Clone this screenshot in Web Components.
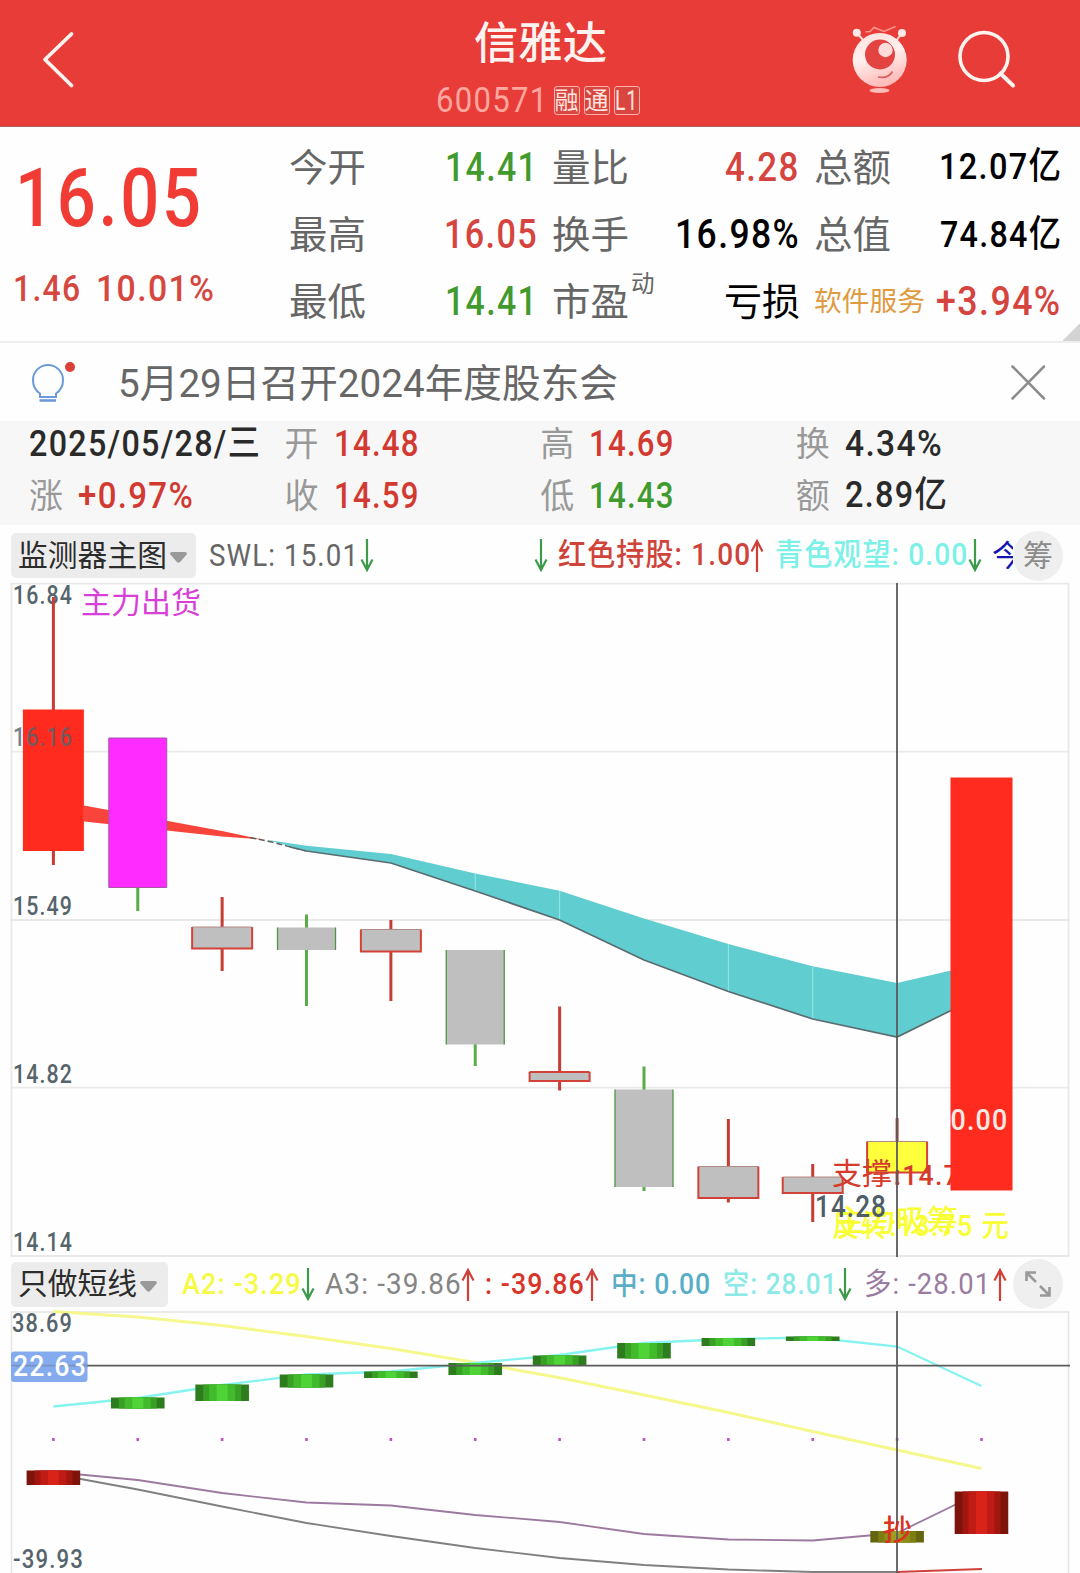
<!DOCTYPE html>
<html lang="zh-CN">
<head>
<meta charset="utf-8">
<title>信雅达 600571</title>
<style>
    body {
        margin: 0;
        width: 1080px;
        height: 1573px;
        overflow: hidden;
        background: #fefefe;
        font-family: Roboto, "Noto Sans CJK SC", sans-serif;
    }
</style>
</head>
<body>
<stock-page></stock-page>

<script>
// Single line of text squeezed or stretched to the width given in "w"
class FitText extends HTMLElement {
    constructor() {
        super();
        this.attachShadow({ mode: 'open' });
        this.shadowRoot.innerHTML = `
            <style>
                :host {
                    display: block;
                    flex: none;
                    line-height: 1;
                    white-space: nowrap;
                }

                span {
                    display: inline-block;
                    transform-origin: 0 50%;
                }

                .digits { letter-spacing: 0.040em; }
            </style>
            <span><slot></slot></span>
        `;
    }

    connectedCallback() {
        const w = Number(this.getAttribute('w'));
        const size = this.getAttribute('size');
        const span = this.shadowRoot.querySelector('span');
        if (size) this.style.fontSize = size + 'px';
        this.style.height = '1em';
        span.classList.toggle('digits', /\d/.test(this.textContent));
        if (w) {
            this.style.width = w + 'px';
            span.style.transform = `scaleX(${w / span.offsetWidth})`;
        }
    }
}
customElements.define('fit-text', FitText);

class AppHeader extends HTMLElement {
    constructor() {
        super();
        this.attachShadow({ mode: 'open' });
        this.shadowRoot.innerHTML = `
            <style>
                :host {
                    display: grid;
                    grid-template-columns: 330px 1fr 330px;
                    height: 126px;
                    background: #e83c38;
                    border-bottom: 1px solid #a8605c;
                    color: #fff3f0;
                }

                .title {
                    display: flex;
                    flex-direction: column;
                    align-items: center;
                    padding-top: 22px;
                    font-weight: 500;
                }

                .code {
                    display: flex;
                    align-items: center;
                    gap: 4px;
                    margin: 17px 5px 0 0;
                    font-weight: 400;
                }

                .code > fit-text:first-child {
                    color: #ffa79f;
                    margin-right: 2px;
                }

                .badge {
                    box-sizing: border-box;
                    width: 26px;
                    height: 29px;
                    display: flex;
                    align-items: center;
                    justify-content: center;
                    border: 1px solid #ffb0aa;
                    border-radius: 3px;
                    background: #d9453f;
                    color: #ffe3df;
                }
            </style>
            <svg width="330" height="126" fill="none" stroke="#fff3f0" stroke-width="3.8" stroke-linecap="round" stroke-linejoin="round">
                <path d="M71.500 34L45 59.500L71.500 85.500"/>
            </svg>
            <div class="title">
                <fit-text w="133" size="44">信雅达</fit-text>
                <div class="code">
                    <fit-text w="112" size="35">600571</fit-text>
                    <div class="badge"><fit-text w="24" size="24">融</fit-text></div>
                    <div class="badge"><fit-text w="24" size="24">通</fit-text></div>
                    <div class="badge"><fit-text w="23" size="28">L1</fit-text></div>
                </div>
            </div>
            <svg width="330" height="126" viewBox="750 0 330 126" fill="none">
                <defs>
                    <linearGradient id="face" x1="0" y1="0" x2="0.3" y2="1">
                        <stop offset="0" stop-color="#ffdfdc"/>
                        <stop offset="0.500" stop-color="#fff0ee"/>
                        <stop offset="1" stop-color="#ffbdbb"/>
                    </linearGradient>
                </defs>
                <g stroke="#ffdad6" stroke-width="2">
                    <path d="M857 33L864 41M902 33L896 41"/>
                    <path d="M865.500 31.700L870 31.500L874 27.500L884 31.500L895.500 26.500" stroke="#ff958f" stroke-width="1.500"/>
                </g>
                <circle cx="856.800" cy="32.800" r="4" fill="#ffe9e6"/>
                <circle cx="902" cy="33" r="4" fill="#ffe9e6"/>
                <circle cx="879.700" cy="60" r="27" fill="url(#face)"/>
                <circle cx="880" cy="54.500" r="15" fill="#e44441"/>
                <circle cx="885.500" cy="50" r="7.200" fill="#ffdcd9"/>
                <path d="M878 77Q888 79 892.500 71.500" stroke="#dc5a57" stroke-width="1.600"/>
                <ellipse cx="879.500" cy="90.500" rx="10" ry="2.500" fill="#ffbcb8"/>
                <circle cx="984" cy="56.500" r="24" stroke="#fff3f0" stroke-width="3.600"/>
                <path d="M1000.500 73.500L1013 85.500" stroke="#fff3f0" stroke-width="4" stroke-linecap="round"/>
            </svg>
        `;
    }
}
customElements.define('app-header', AppHeader);

class QuotePanel extends HTMLElement {
    constructor() {
        super();
        this.attachShadow({ mode: 'open' });
        this.shadowRoot.innerHTML = `
            <style>
                :host {
                    display: grid;
                    grid-template-columns: 275px 249px 248px 248px;
                    column-gap: 14px;
                    box-sizing: border-box;
                    height: 216px;
                    border-bottom: 2px solid #eee;
                    background: linear-gradient(135deg, transparent 11px, #d3d3d3 12px) right bottom / 17px 17px no-repeat;
                    font-weight: 500;
                    color: #000;
                }

                .price {
                    padding: 31px 0 0 15px;
                    color: #f03c34;
                }

                .change {
                    display: flex;
                    gap: 15px;
                    margin: 31px 0 0 -2px;
                    color: #d6473f;
                }

                .col {
                    display: flex;
                    flex-direction: column;
                    padding-top: 8px;
                }

                .row {
                    height: 66.700px;
                    display: flex;
                    align-items: center;
                    justify-content: space-between;
                }

                .label {
                    color: #666;
                    font-weight: 400;
                    position: relative;
                }

                .label sup {
                    position: absolute;
                    left: 79px;
                    top: -10px;
                    font-size: 23.500px;
                    line-height: 1;
                }

                .red { color: #d5443f; }
                .green { color: #429a2e; }
                .cn { font-weight: 400; }
                .sector { color: #e09b42; font-weight: 400; }
            </style>
            <div class="price">
                <fit-text w="189" size="81">16.05</fit-text>
                <div class="change">
                    <fit-text w="68" size="37.5">1.46</fit-text>
                    <fit-text w="119" size="37.5">10.01%</fit-text>
                </div>
            </div>
            <div class="col">
                <div class="row"><fit-text class="label" w="77" size="38">今开</fit-text><fit-text class="green" w="93" size="40">14.41</fit-text></div>
                <div class="row"><fit-text class="label" w="77" size="38">最高</fit-text><fit-text class="red" w="94" size="40">16.05</fit-text></div>
                <div class="row"><fit-text class="label" w="77" size="38">最低</fit-text><fit-text class="green" w="93" size="40">14.41</fit-text></div>
            </div>
            <div class="col">
                <div class="row"><fit-text class="label" w="77" size="38">量比</fit-text><fit-text class="red" w="75" size="40">4.28</fit-text></div>
                <div class="row"><fit-text class="label" w="77" size="38">换手</fit-text><fit-text w="125" size="40">16.98%</fit-text></div>
                <div class="row"><div class="label"><fit-text w="77" size="38">市盈</fit-text><sup>动</sup></div><fit-text class="cn" w="76" size="38">亏损</fit-text></div>
            </div>
            <div class="col">
                <div class="row"><fit-text class="label" w="77" size="38">总额</fit-text><fit-text w="123" size="37" style="margin-top:-4px">12.07亿</fit-text></div>
                <div class="row"><fit-text class="label" w="77" size="38">总值</fit-text><fit-text w="122" size="37" style="margin-top:-2px">74.84亿</fit-text></div>
                <div class="row"><fit-text class="sector" w="111" size="27.5">软件服务</fit-text><fit-text class="red" w="126" size="40">+3.94%</fit-text></div>
            </div>
        `;
    }
}
customElements.define('quote-panel', QuotePanel);

class NoticeBar extends HTMLElement {
    constructor() {
        super();
        this.attachShadow({ mode: 'open' });
        this.shadowRoot.innerHTML = `
            <style>
                :host {
                    display: flex;
                    align-items: center;
                    height: 78px;
                    color: #666;
                }

                fit-text { padding-top: 5px; }
                .close { margin-left: auto; }
            </style>
            <svg width="118" height="78" fill="none" stroke="#6b9ad8" stroke-width="2">
                <path d="M40 50.500C36 48 33 43 33 37A15 15 0 0 1 63 37C63 43 60 48 56 50.500V54H40Z"/>
                <path d="M39.500 57.500H56" stroke-width="2.600"/>
                <circle cx="70" cy="24" r="5" fill="#dc3f39" stroke="none"/>
            </svg>
            <fit-text w="500" size="38.5"><slot></slot></fit-text>
            <svg class="close" width="80" height="78" fill="none" stroke="#8c8c8c" stroke-width="2.500" stroke-linecap="round">
                <path d="M12.500 23.500L44 55.500M44 23.500L12.500 55.500"/>
            </svg>
        `;
    }
}
customElements.define('notice-bar', NoticeBar);

class DayStrip extends HTMLElement {
    constructor() {
        super();
        this.attachShadow({ mode: 'open' });
        this.shadowRoot.innerHTML = `
            <style>
                :host {
                    display: grid;
                    grid-template-columns: repeat(4, 255.600px);
                    grid-template-rows: 52px 52px;
                    box-sizing: border-box;
                    height: 104px;
                    padding-left: 29px;
                    background: #f7f7f7;
                    color: #2a2a2a;
                    font-weight: 500;
                }

                div {
                    display: flex;
                    align-items: center;
                    gap: 15px;
                    padding-bottom: 7px;
                }

                .l {
                    color: #999;
                    font-weight: 400;
                }

                .red { color: #d23a31; }
                .green { color: #3f9b2f; }
            </style>
            <div><fit-text w="232" size="37">2025/05/28/三</fit-text></div>
            <div><fit-text class="l" w="34" size="34">开</fit-text><fit-text class="red" w="86" size="37">14.48</fit-text></div>
            <div><fit-text class="l" w="34" size="34">高</fit-text><fit-text class="red" w="86" size="37">14.69</fit-text></div>
            <div><fit-text class="l" w="34" size="34">换</fit-text><fit-text w="98" size="37">4.34%</fit-text></div>
            <div><fit-text class="l" w="34" size="34">涨</fit-text><fit-text class="red" w="116" size="37">+0.97%</fit-text></div>
            <div><fit-text class="l" w="34" size="34">收</fit-text><fit-text class="red" w="86" size="37">14.59</fit-text></div>
            <div><fit-text class="l" w="34" size="34">低</fit-text><fit-text class="green" w="86" size="37">14.43</fit-text></div>
            <div><fit-text class="l" w="34" size="34">额</fit-text><fit-text w="103" size="36.5">2.89亿</fit-text></div>
        `;
    }
}
customElements.define('day-strip', DayStrip);

// Small trend arrow: <trend-arrow dir="up|down">
class TrendArrow extends HTMLElement {
    constructor() {
        super();
        this.attachShadow({ mode: 'open' });
    }

    connectedCallback() {
        const up = this.getAttribute('dir') === 'up';
        this.shadowRoot.innerHTML = `
            <style>
                :host {
                    display: block;
                    flex: none;
                    width: 14px;
                    height: 33px;
                }
            </style>
            <svg width="14" height="33" fill="none" stroke-width="2.200" stroke="${up ? '#cf4038' : '#3c9a4a'}">
                <path d="${up ? 'M7 33V2M1.500 12.500L7 2L12.500 12.500' : 'M7 0V31M1.500 20.500L7 31L12.500 20.500'}"/>
            </svg>
        `;
    }
}
customElements.define('trend-arrow', TrendArrow);

class IndicatorBar extends HTMLElement {
    constructor() {
        super();
        this.attachShadow({ mode: 'open' });
        this.shadowRoot.innerHTML = `
            <style>
                :host {
                    display: flex;
                    align-items: center;
                    box-sizing: border-box;
                    padding-left: 11px;
                }

                .select {
                    box-sizing: border-box;
                    flex: none;
                    width: var(--select-width);
                    height: 45px;
                    display: flex;
                    align-items: center;
                    gap: 3px;
                    padding-left: 7px;
                    border-radius: 5px;
                    background: #ececec;
                    color: #2c2c2c;
                }

                .select svg { margin-top: 4px; }

                .values {
                    display: flex;
                    align-items: center;
                    width: calc(1002px - var(--select-width));
                    overflow: hidden;
                    flex: none;
                }

                .round {
                    flex: none;
                    width: 50px;
                    height: 50px;
                    display: flex;
                    align-items: center;
                    justify-content: center;
                    border-radius: 50%;
                    background: #efefef;
                    color: #8b8b8b;
                }
            </style>
            <div class="select">
                <slot name="name"></slot>
                <svg width="17" height="11" fill="#999"><path d="M0 2Q0 0 2 0H15Q17 0 17 2L11 9Q8.500 12.500 6 9Z"/></svg>
            </div>
            <div class="values"><slot></slot></div>
            <div class="round"><slot name="action"></slot></div>
        `;
    }
}
customElements.define('indicator-bar', IndicatorBar);

// x of the centre of trading day i
const dayX = i => 53.4 + 84.37 * i;

const label = (x, y, w, size, text, fill = '#56646c', weight = 500) =>
    `<text x="${x}" y="${y}" font-size="${size}" textLength="${w}" lengthAdjust="spacingAndGlyphs" fill="${fill}" font-weight="${weight}"${/\d/.test(text) ? ' letter-spacing="1.300"' : ''}>${text}</text>`;

class PriceChart extends HTMLElement {
    constructor() {
        super();
        this.attachShadow({ mode: 'open' });

        // kind, high, top, bottom, low
        const candles = [
            ['red', 597, 709.5, 851, 865],
            ['magenta', 738, 738, 887.5, 911],
            ['up', 897, 927, 948.5, 971],
            ['down', 914.5, 927.5, 950, 1006],
            ['up', 920, 929.5, 951.5, 1001],
            ['down', 950, 950, 1044.5, 1066],
            ['up', 1006.5, 1072, 1081, 1090.5],
            ['down', 1066.5, 1089.5, 1187, 1191],
            ['up', 1119, 1166.5, 1198, 1202.5],
            ['up', 1164, 1177, 1193, 1222],
            ['yellow', 1118, 1141.5, 1172.5, 1185],
        ];
        const fills = { red: '#ff2b1e', magenta: '#ff2bff', yellow: '#ffff3c', up: '#bfbfbf', down: '#bfbfbf' };

        const bars = candles.map(([kind, high, top, bottom, low], i) => {
            const green = kind === 'down' || kind === 'magenta';
            const half = kind === 'red' ? 31 : green ? 29.5 : 30.5;
            const x = dayX(i);
            const ink = green ? '#58ad48' : '#c63d33';
            const edge = kind === 'magenta' ? '#a35aa5' : green ? '#4f9746' : '#d24238';
            const l = x - half + 0.5;
            const r = x + half - 0.5;
            let out = `<path d="M${x} ${high}V${low}" stroke="${ink}" stroke-width="3"/>`;
            out += `<path d="M${l} ${top}H${r}V${bottom}H${l}Z" fill="${fills[kind]}"/>`;
            if (kind === 'magenta') {
                out += `<path d="M${l} ${top}H${r}V${bottom}H${l}Z" stroke="${edge}"/>`;
            } else if (green) {
                out += `<path d="M${l} ${top}V${bottom}M${r} ${top}V${bottom}" stroke="${edge}" stroke-width="1.300"/>`;
            } else if (kind !== 'red') {
                out += `<path d="M${l} ${top}V${bottom}H${r}V${top}" stroke="${edge}" stroke-width="2"/>`;
                out += `<path d="M${l} ${top}H${r}" stroke="${i === 6 ? edge : '#b48a86'}" stroke-width="${i === 6 ? 2 : 1}"/>`;
            }
            return out;
        }).join('');

        const upper = [845.7, 854, 873.5, 890.7, 918.5, 944, 966.3, 983];
        const lower = [851, 863, 891, 920, 960, 991.5, 1019, 1037];
        const up = upper.map((y, i) => `${dayX(i + 3)} ${y}`);
        const low = lower.map((y, i) => `${dayX(i + 3)} ${y}`);
        const seams = [5, 6, 8, 9].map(i => `M${dayX(i)} ${upper[i - 3]}V${lower[i - 3]}`).join('');

        this.shadowRoot.innerHTML = `
            <style>
                :host { display: block; height: 675px; }
                svg { display: block; overflow: visible; }
            </style>
            <svg width="1080" height="675" viewBox="0 582 1080 675" fill="none">
                <path d="M11.500 583.700H1068.500V1256H11.500ZM11.500 751.700H1068.500M11.500 920H1068.500M11.500 1087.700H1068.500" stroke="#e9e9e9" stroke-width="1.800"/>
                ${label(13, 604, 60, 25, '16.84')}
                <path d="M84 805.500L222 831L262 839.500L222 836.500L84 821.500Z" fill="#f8443b"/>
                <path d="M250 837.500L272 842L${low[0]}" stroke="#5d5d5d" stroke-width="1.600" stroke-dasharray="6 3"/>
                <path d="M268 840L${up.join('L')}L951 970.500V1010.500L${[...low].reverse().join('L')}Z" fill="#60cdd0"/>
                <path d="${seams}" stroke="#9ce6e8"/>
                <path d="M290 847L${low.join('L')}L951 1010.500" stroke="#5a6c70" stroke-width="1.700"/>
                ${bars}
                <g opacity="0.800">${label(13, 745.5, 60, 25, '16.16')}</g>
                ${label(13, 914.7, 60, 25, '15.49')}
                ${label(13, 1082.7, 60, 25, '14.82')}
                ${label(13, 1250.7, 60, 25, '14.14')}
                ${label(81, 613, 120, 30, '主力出货', '#d83fd8', 400)}
                ${label(832, 1184, 60, 30, '支撑', '#d63a2b', 400)}
                ${label(894, 1184.5, 66, 28.5, ':14.7', '#d63a2b', 500)}
                ${label(832, 1236, 178, 30, '反转:13.75 元', '#f8ff35', 500)}
                ${label(834, 1231, 124, 30, '主力吸筹', '#f8ff35', 500)}
                ${label(815, 1217, 72, 30.5, '14.28', '#4e5d68', 500)}
                <path d="M897 583V1257" stroke="#5a5a5a" stroke-width="1.800"/>
                <rect x="950.500" y="777.500" width="62" height="413" fill="#ff2b1e"/>
                ${label(950.5, 1130, 58, 29, '0.00', '#ffe9e4', 500)}
            </svg>
        `;
    }
}
customElements.define('price-chart', PriceChart);

class ShortLineChart extends HTMLElement {
    constructor() {
        super();
        this.attachShadow({ mode: 'open' });

        const bars = [
            ['r', 1470.5, 1485], ['g', 1397.5, 1408.5], ['g', 1384.5, 1401], ['g', 1374.5, 1387.5],
            ['g', 1371.5, 1378], ['g', 1363, 1375], ['g', 1355.5, 1365], ['g', 1343, 1358.5],
            ['g', 1338, 1346], ['g', 1336.5, 1341], ['o', 1531, 1542.5], ['r', 1491.5, 1534],
        ];
        // from the outer edge to the middle
        const shades = {
            r: ['#7d140c', '#a31610', '#bd1b13', '#d92218'],
            g: ['#2d7d1f', '#38a024', '#41bb2b', '#4fd337'],
            o: ['#66650f', '#7d7c13', '#8c8c18', '#9d9d22'],
        };
        const steps = [26.8, 19, 13, 5.5];
        const drums = bars.map(([c, top, bottom], i) => steps.map((half, s) =>
            `<rect x="${dayX(i) - half}" y="${top}" width="${half * 2}" height="${bottom - top}" fill="${shades[c][s]}"/>`
        ).join('')).join('');

        const line = ys => 'M' + ys.map((y, i) => `${dayX(i)} ${y}`).join('L');
        const yellow = [1311.5, 1317, 1325.5, 1336.5, 1348.5, 1362.5, 1377.7, 1395, 1412.5, 1431.5, 1450, 1468.5];
        const cyan = [1406.5, 1398, 1385, 1374.5, 1371.5, 1363, 1355, 1343, 1339, 1337.5, 1346.5, 1386];
        const purple = [1472, 1480, 1493, 1502.5, 1505.5, 1515, 1522, 1534, 1539.5, 1540.5, 1533, 1492];
        const grey = [1474, 1489.5, 1506.5, 1523, 1536, 1548, 1558, 1565, 1569.5, 1572, 1572];
        const dots = bars.map((b, i) => `<rect x="${dayX(i) - 1.3}" y="1438" width="2.600" height="3" fill="#c44fc8"/>`).join('');

        this.shadowRoot.innerHTML = `
            <style>
                :host { display: block; height: 262px; }
                svg { display: block; overflow: visible; }
            </style>
            <svg width="1080" height="262" viewBox="0 1311 1080 262" fill="none">
                <path d="M11.500 1573V1312H1068.500V1573" stroke="#e4e4e4" stroke-width="1.500"/>
                <path d="${line(yellow)}" stroke="#f5f88d" stroke-width="3"/>
                <path d="${line(cyan)}" stroke="#87f3f0" stroke-width="2.300"/>
                <path d="${line(purple)}" stroke="#9c7a9f" stroke-width="1.800"/>
                <path d="${line(grey)}" stroke="#808080" stroke-width="1.800"/>
                <path d="M897 1572L982 1569" stroke="#d0403a" stroke-width="2.200"/>
                ${dots}
                ${drums}
                <rect x="11" y="1351.500" width="76.500" height="30.500" rx="3" fill="#84abed"/>
                <path d="M11 1365.700H1070M897 1311V1573" stroke="#5c5c5c" stroke-width="1.800"/>
                <rect x="11" y="1363" width="76.500" height="5" fill="#84abed" opacity="0.700"/>
                ${label(13, 1376, 74, 29, '22.63', '#fff', 500)}
                ${label(12, 1332, 61, 25, '38.69')}
                ${label(13, 1568, 71, 25, '-39.93')}
                ${label(883, 1540.5, 29, 29, '抄', '#d8331f', 500)}
            </svg>
        `;
    }
}
customElements.define('short-line-chart', ShortLineChart);

class StockPage extends HTMLElement {
    constructor() {
        super();
        this.attachShadow({ mode: 'open' });
        this.shadowRoot.innerHTML = `
            <style>
                :host {
                    display: flex;
                    flex-direction: column;
                    width: 1080px;
                }

                .main {
                    --select-width: 185px;
                    height: 57px;
                    padding-top: 4px;
                }

                .sub {
                    --select-width: 157px;
                    height: 54px;
                }
            </style>
            <app-header></app-header>
            <quote-panel></quote-panel>
            <notice-bar>5月29日召开2024年度股东会</notice-bar>
            <day-strip></day-strip>
            <indicator-bar class="main">
                <fit-text slot="name" w="149" size="30">监测器主图</fit-text>
                <fit-text w="150" size="31" style="color:#666;margin-left:13px">SWL: 15.01</fit-text>
                <trend-arrow dir="down" style="margin-left:1px"></trend-arrow>
                <trend-arrow dir="down" style="margin-left:160px"></trend-arrow>
                <fit-text w="193" size="30.500" style="color:#cf443a;margin-left:10px;font-weight:500">红色持股: 1.00</fit-text>
                <trend-arrow dir="up" style="margin-left:-1px"></trend-arrow>
                <fit-text w="193" size="30.500" style="color:#7df0e8;margin-left:11px;font-weight:500">青色观望: 0.00</fit-text>
                <trend-arrow dir="down"></trend-arrow>
                <fit-text size="30" style="color:#1414b4;margin-left:10px">今</fit-text>
                <fit-text slot="action" w="30" size="30">筹</fit-text>
            </indicator-bar>
            <price-chart></price-chart>
            <indicator-bar class="sub">
                <fit-text slot="name" w="119" size="30">只做短线</fit-text>
                <fit-text w="120" size="30" style="color:#f6fa45;margin-left:14px;font-weight:500">A2: -3.29</fit-text>
                <trend-arrow dir="down" style="margin-left:-1px"></trend-arrow>
                <fit-text w="137" size="30" style="color:#858585;margin-left:10px">A3: -39.86</fit-text>
                <trend-arrow dir="up" style="margin-left:-1px"></trend-arrow>
                <fit-text w="100" size="30" style="color:#d8342a;margin-left:10px;font-weight:500">: -39.86</fit-text>
                <trend-arrow dir="up"></trend-arrow>
                <fit-text w="100" size="30" style="color:#58aec6;margin-left:12px;font-weight:500">中: 0.00</fit-text>
                <fit-text w="115" size="30" style="color:#8ce9e6;margin-left:12px;font-weight:500">空: 28.01</fit-text>
                <trend-arrow dir="down"></trend-arrow>
                <fit-text w="127" size="30" style="color:#9a7ca0;margin-left:12px">多: -28.01</fit-text>
                <trend-arrow dir="up" style="margin-left:2px"></trend-arrow>
                <svg slot="action" width="28" height="28" fill="none" stroke="#999" stroke-width="2.600">
                    <path d="M2.500 11V2.500H12M2.500 2.500L12 12M25.500 17V25.500H16M25.500 25.500L16 16"/>
                </svg>
            </indicator-bar>
            <short-line-chart></short-line-chart>
        `;
    }
}
customElements.define('stock-page', StockPage);
</script>
</body>
</html>
